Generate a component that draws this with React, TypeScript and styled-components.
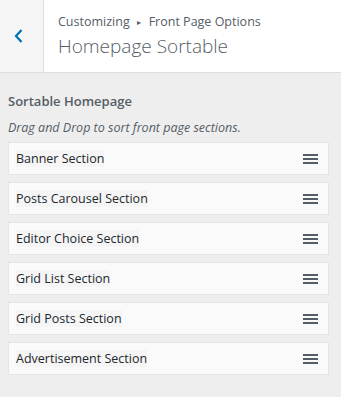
import React from "react";
import styled, {createGlobalStyle} from "styled-components";

const GlobalStyle = createGlobalStyle`
  html, body {
    margin: 0;
    padding: 0;
    background: #eeeeee;
    font-family: "Open Sans", "Noto Sans", sans-serif;
  }
`;

const Panel = styled.div`
  width: 341px;
  height: 397px;
  background: #eeeeee;
  overflow: hidden;
`;

const Header = styled.div`
  display: flex;
  height: 72px;
  background: #fff;
  border-bottom: 1px solid #dddddd;
`;

const BackButton = styled.button`
  width: 44px;
  flex: none;
  display: flex;
  align-items: center;
  justify-content: flex-start;
  padding: 0 0 0 14px;
  border: none;
  border-right: 1px solid #dddddd;
  background: #f5f5f5;
  color: #0073aa;
  cursor: pointer;
`;

const Titles = styled.div`
  padding: 12px 0 0 14px;
  display: flex;
  flex-direction: column;
`;

const Crumb = styled.div`
  font-size: 12.5px;
  line-height: 20px;
  color: #555d66;
  display: flex;
  align-items: center;
`;

const Arrow = styled.span`
  font-size: 8px;
  margin: 0 8px 0 7px;
`;

const Title = styled.h2`
  margin: 0;
  font-size: 19px;
  font-weight: 300;
  line-height: 28px;
  color: #555d66;
`;

const Body = styled.div`
  padding: 19px 12px 0 8px;
`;

const SectionTitle = styled.div`
  font-size: 13px;
  font-weight: 600;
  color: #555d66;
  line-height: 18px;
`;

const Description = styled.div`
  font-size: 12.5px;
  font-style: italic;
  color: #555d66;
  line-height: 18px;
  margin-top: 9px;
`;

const List = styled.ul`
  list-style: none;
  margin: 5px 0 0;
  padding: 0;
  display: flex;
  flex-direction: column;
  gap: 7px;
`;

const Item = styled.li`
  height: 31px;
  display: flex;
  align-items: center;
  justify-content: space-between;
  padding: 0 10px 0 7px;
  background: #fafafa;
  border: 1px solid #e5e5e5;
  font-size: 12.5px;
  color: #23282d;
`;

const Label = styled.span`
  background: #f5f5f5;
  line-height: 17px;
`;

const Handle = () => (
  <svg width="15" height="12" viewBox="0 0 15 12">
    <rect x="0" y="1" width="15" height="2" fill="#555d66" />
    <rect x="0" y="5" width="15" height="2" fill="#555d66" />
    <rect x="0" y="9" width="15" height="2" fill="#555d66" />
  </svg>
);

const sections = [
  "Banner Section",
  "Posts Carousel Section",
  "Editor Choice Section",
  "Grid List Section",
  "Grid Posts Section",
  "Advertisement Section",
];

export default function App() {
  return (
    <Panel>
      <GlobalStyle />
      <Header>
        <BackButton aria-label="Back">
          <svg width="9" height="14" viewBox="0 0 9 14">
            <path d="M7.5 1 L2 7 L7.5 13" fill="none" stroke="#0073aa" strokeWidth="2.2" />
          </svg>
        </BackButton>
        <Titles>
          <Crumb>
            Customizing<Arrow>▸</Arrow>Front Page Options
          </Crumb>
          <Title>Homepage Sortable</Title>
        </Titles>
      </Header>
      <Body>
        <SectionTitle>Sortable Homepage</SectionTitle>
        <Description>Drag and Drop to sort front page sections.</Description>
        <List>
          {sections.map((s) => (
            <Item key={s}>
              <Label>{s}</Label>
              <Handle />
            </Item>
          ))}
        </List>
      </Body>
    </Panel>
  );
}
